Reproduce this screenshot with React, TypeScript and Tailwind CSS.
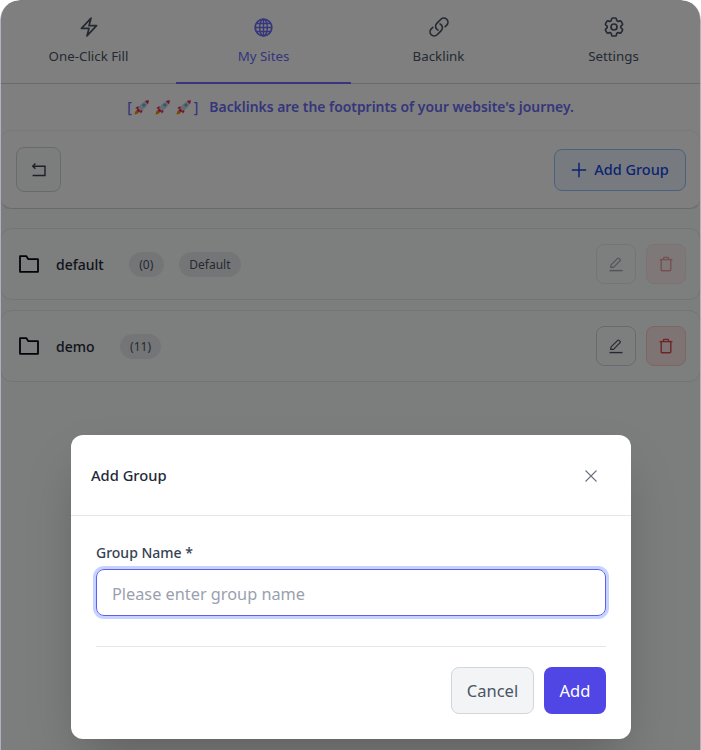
import { HiOutlineBolt, HiOutlineCog6Tooth, HiOutlineLink } from 'react-icons/hi2';

function GlobeIcon({ className }: { className?: string }) {
  return (
    <svg viewBox="0 0 24 24" fill="none" stroke="currentColor" strokeWidth="1.6" className={className}>
      <circle cx="12" cy="12" r="9.5" strokeWidth="2" />
      <ellipse cx="12" cy="12" rx="4.4" ry="9.5" />
      <path d="M12 2.5v19M2.5 12h19M4 7.4h16M4 16.6h16" />
    </svg>
  );
}

function BackIcon() {
  return (
    <svg viewBox="0 0 16 16" fill="none" stroke="currentColor" strokeWidth="1.4" className="w-4 h-4 text-gray-700">
      <path d="M1.8 4.2h12.2v9.3H1.6" />
      <path d="M4.4 1.6 1.8 4.2l2.6 2.6" />
    </svg>
  );
}

function FolderIcon() {
  return (
    <svg viewBox="0 0 20 18" fill="none" stroke="currentColor" strokeWidth="1.8" strokeLinejoin="round" className="w-5 h-[18px] text-gray-950">
      <path d="M1 1.2h6.4l2 3h9.6v12.6H1z" />
    </svg>
  );
}

function EditIcon() {
  return (
    <svg viewBox="0 0 16 16" fill="none" stroke="currentColor" strokeWidth="1.2" strokeLinejoin="round" className="w-4 h-4">
      <path d="m2.6 11.4.5-2.5 6.6-6.6a.9.9 0 0 1 1.3 0l1.1 1.1a.9.9 0 0 1 0 1.3l-6.6 6.7z" />
      <path d="M1.5 14.6h13" strokeWidth="1.4" />
    </svg>
  );
}

function TrashIcon() {
  return (
    <svg viewBox="0 0 16 16" fill="none" stroke="currentColor" strokeWidth="1.4" strokeLinejoin="round" className="w-4 h-4">
      <path d="M1.6 3.6h12.8" />
      <path d="M5.2 3.4 5.8 1.4h4.4l.6 2" />
      <path d="M3.2 3.6v10.2a1 1 0 0 0 1 1h7.6a1 1 0 0 0 1-1V3.6" />
    </svg>
  );
}

function Rocket() {
  return (
    <svg viewBox="0 0 16 16" className="w-4 h-4 shrink-0" role="img" aria-label="🚀">
      <path d="M.6 15.400c.2-2.400 1-3.900 2.500-4.300l1.800 1.800c-.4 1.500-1.900 2.300-4.300 2.500z" fill="#f4900c" />
      <path d="M3.400 7.600 1.200 9.200l2.800.8 1.400-2.200zM8.400 12.600l-1.600 2.200-.8-2.800 2.200-1.400z" fill="#e0245e" />
      <path d="M4.200 9.400C6 5.400 9.400 2 14.800 1.200 14 6.600 10.600 10 6.600 11.800z" fill="#ccd6dd" />
      <path d="M10.800 2c1.200-.4 2.600-.7 4-.8-.1 1.400-.4 2.800-.8 4z" fill="#e0245e" />
      <path d="M4.200 9.400 6.600 11.800 5 13.400 2.600 11z" fill="#e0245e" />
      <circle cx="9.900" cy="6.100" r="1.500" fill="#55acee" />
    </svg>
  );
}

const tabs = [
  { label: 'One-Click Fill', icon: <HiOutlineBolt strokeWidth={1.9} className="w-[22px] h-[22px] my-px" /> },
  { label: 'My Sites', icon: <GlobeIcon className="w-[21px] h-[21px] my-[1.5px]" />, active: true },
  { label: 'Backlink', icon: <HiOutlineLink strokeWidth={1.8} className="w-[22px] h-[22px] my-px" /> },
  { label: 'Settings', icon: <HiOutlineCog6Tooth strokeWidth={1.7} className="w-6 h-6" /> },
];

const groups = [
  { name: 'default', count: 0, isDefault: true },
  { name: 'demo', count: 11, isDefault: false },
];

export default function App() {
  return (
    <div className="h-[750px] bg-white overflow-hidden font-['Noto_Sans',sans-serif]">
      <div className="relative h-full overflow-hidden rounded-t-[20px] bg-white flex flex-col">
        {/* Tabs */}
        <div className="flex h-[84px] shrink-0 pl-px border-b border-gray-300">
          {tabs.map(tab => (
            <div
              key={tab.label}
              className={`flex-1 h-[84px] flex flex-col items-center pt-[15px] ${
                tab.active ? 'text-[#6a6cf6] border-b-2 border-[#6a6cf6]' : 'text-gray-600'
              }`}
            >
              {tab.icon}
              <span className="text-[13.3px] leading-5 mt-[7px]">{tab.label}</span>
            </div>
          ))}
        </div>

        <div className="h-[46px] shrink-0 flex items-center justify-center text-[13.9px] font-semibold text-[#6a6cf6]">
          <span className="flex items-center gap-[2px] font-medium">
            <span>[</span>
            <span className="flex items-center gap-[5px]">
              <Rocket />
              <Rocket />
              <Rocket />
            </span>
            <span>]</span>
          </span>
          <span className="ml-[11px]">Backlinks are the footprints of your website's journey.</span>
        </div>

        {/* Toolbar */}
        <div className="h-[79px] shrink-0 flex items-center justify-between pl-[15px] pr-[14px] rounded-xl border border-gray-100 border-b-gray-300 shadow-sm">
          <button className="w-[45px] h-[45px] flex items-center justify-center rounded-lg border border-gray-300 bg-gray-50">
            <BackIcon />
          </button>
          <button className="h-[42px] w-[132px] flex items-center justify-center gap-[7px] rounded-lg border border-blue-300 bg-blue-50 text-[14.5px] font-medium text-blue-700">
            <svg viewBox="0 0 16 16" fill="none" stroke="currentColor" strokeWidth="1.5" className="w-4 h-4">
              <path d="M8 .8v14.400M.8 8h14.400" />
            </svg>
            Add Group
          </button>
        </div>

        {/* Groups */}
        <div className="flex-1 flex flex-col gap-[10px] pt-[19px] bg-[#f8fbfa]">
          {groups.map(group => (
            <div key={group.name} className="h-[72px] flex items-center justify-between pl-[18px] pr-[14px] rounded-xl border border-[#e8e9ea] bg-[#fbfcfc]">
              <div className="flex items-center">
                <FolderIcon />
                <span className="ml-[17px] text-[14px] font-medium text-gray-800">{group.name}</span>
                <span className="ml-[25px] h-[25px] pt-px px-[10.5px] flex items-center rounded-full bg-[#e9ebee] text-xs text-gray-600">({group.count})</span>
                {group.isDefault && (
                  <span className="ml-[15px] h-[25px] pt-px px-[10.5px] flex items-center rounded-full bg-[#e9ebee] text-xs text-gray-600">Default</span>
                )}
              </div>
              <div className={`flex gap-[10px] ${group.isDefault ? 'opacity-50' : ''}`}>
                <button className="w-10 h-10 flex items-center justify-center rounded-lg border border-gray-300 text-gray-600">
                  <EditIcon />
                </button>
                <button className="w-10 h-10 flex items-center justify-center rounded-lg border border-red-200 bg-[#fde8e8] text-[#e0474d]">
                  <TrashIcon />
                </button>
              </div>
            </div>
          ))}
        </div>

        {/* Modal */}
        <div className="absolute inset-0 bg-black/50 border-x border-[#d4d4ea]/60 rounded-t-[20px] flex items-end justify-center pb-[11px]">
          <div className="w-[560px] h-[304px] ml-px rounded-xl bg-white shadow-2xl">
            <div className="h-[81px] pt-px flex items-center justify-between pl-5 pr-[33px] border-b border-gray-200">
              <span className="text-[14.7px] font-medium text-gray-800">Add Group</span>
              <svg viewBox="0 0 14 14" fill="none" stroke="currentColor" strokeWidth="1.1" className="w-[14px] h-[14px] text-gray-500">
                <path d="M1.500 1.500l11 11M12.500 1.500l-11 11" />
              </svg>
            </div>
            <div className="px-[25px] pt-[27px]">
              <label className="block text-[14px] leading-5 font-medium text-gray-700">Group Name *</label>
              <input
                readOnly
                placeholder="Please enter group name"
                className="block w-full h-[47px] mt-[6px] pt-[2px] px-[15px] rounded-lg border border-[#5d5fef] ring-[3px] ring-indigo-200 text-[16.3px] outline-none placeholder:text-gray-400"
              />
              <div className="mt-[30px] pt-5 border-t border-gray-200 flex justify-end gap-[10px]">
                <button className="w-[83px] h-[47px] pt-[2px] rounded-lg border border-gray-300 bg-gray-100 text-[16.5px] text-gray-600">Cancel</button>
                <button className="w-[62px] h-[47px] pt-[2px] rounded-lg bg-[#4f46e5] text-[16.5px] text-white">Add</button>
              </div>
            </div>
          </div>
        </div>
      </div>
    </div>
  );
}
